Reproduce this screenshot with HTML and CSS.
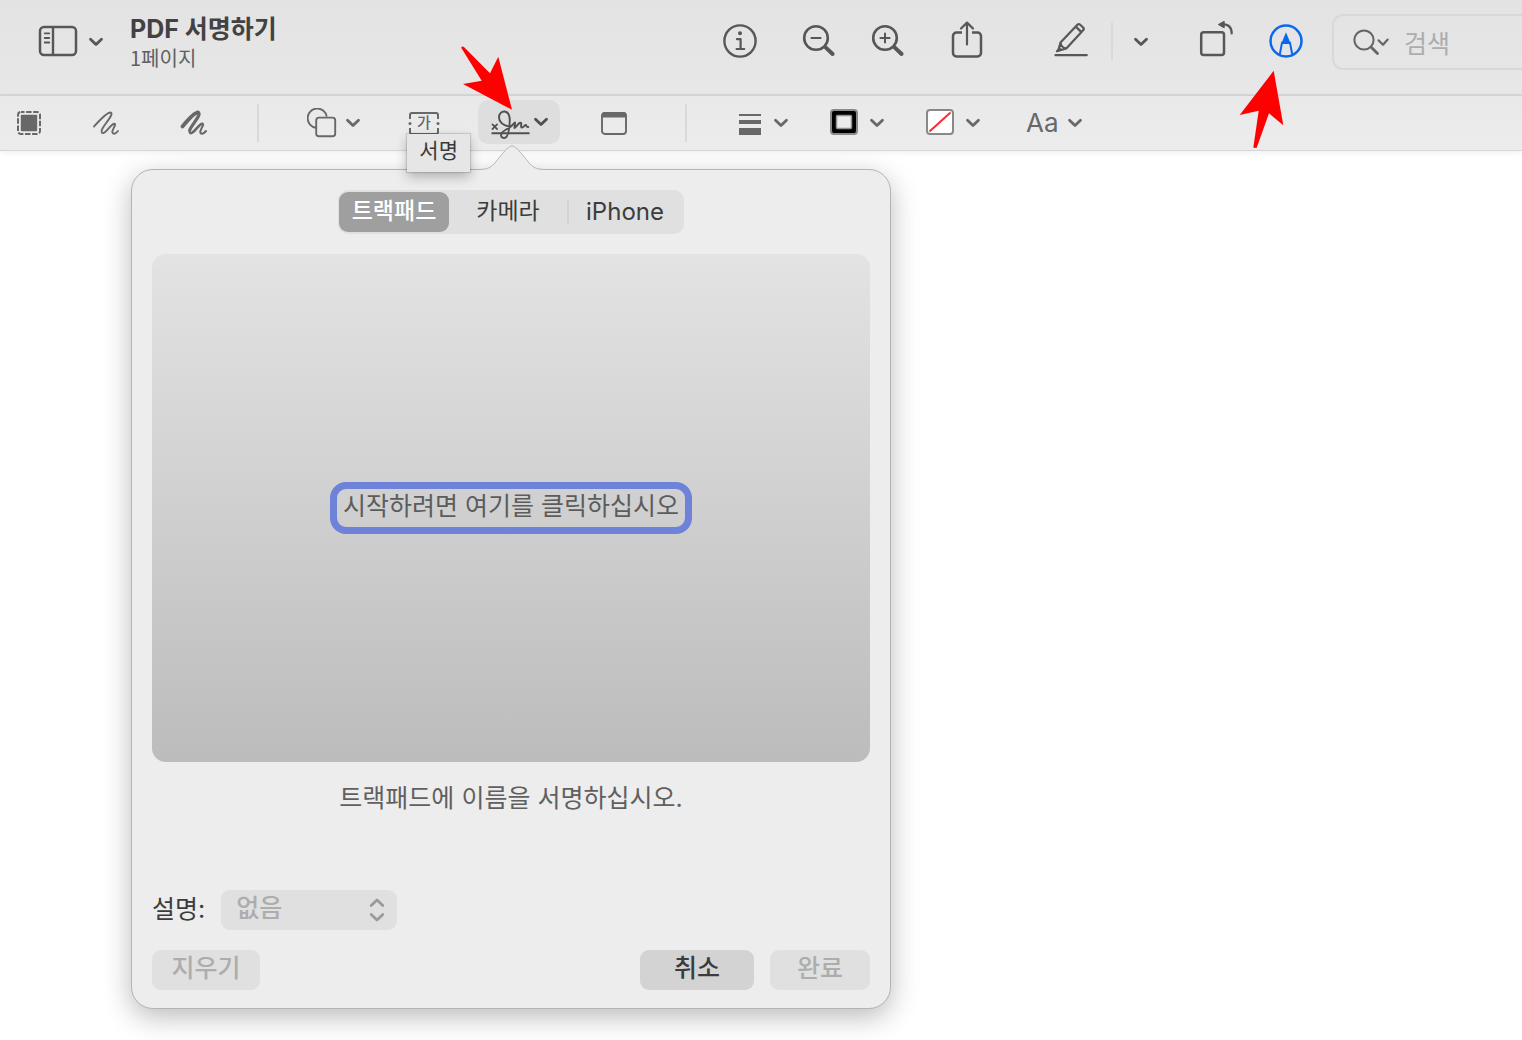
FILE: index.html
```html
<!DOCTYPE html>
<html lang="ko">
<head>
<meta charset="utf-8">
<title>PDF 서명하기</title>
<link rel="stylesheet" href="styles.css">
</head>
<body>
<svg class="defs" aria-hidden="true">
  <symbol id="chevron" viewBox="0 0 16 12"><path d="M2.5 3.2 8 8.6 13.5 3.2" fill="none" stroke="currentColor" stroke-width="2.8" stroke-linecap="round" stroke-linejoin="round"/></symbol>
</svg>

<header class="titlebar">
  <button class="btn sidebar-btn" aria-label="사이드바">
    <svg width="40" height="32" viewBox="0 0 40 32" fill="none" stroke="currentColor">
      <rect x="2" y="2" width="36" height="28" rx="4" stroke-width="2.5"/>
      <path d="M15 2v28" stroke-width="2.4"/>
      <path d="M6.7 8.3h4.6M6.7 13h4.6M6.7 17.5h4.6" stroke-width="1.8" stroke-linecap="round"/>
    </svg>
    <svg width="16" height="14" viewBox="0 -2 16 14"><use href="#chevron" width="16" height="12"/></svg>
  </button>
  <div class="titles">
    <h1 class="title">PDF 서명하기</h1>
    <p class="subtitle">1페이지</p>
  </div>
  <div class="actions">
    <button class="btn action" aria-label="정보">
      <svg width="36" height="36" viewBox="0 0 36 36" fill="none" stroke="currentColor">
        <circle cx="18" cy="18" r="15.6" stroke-width="2.4"/>
        <circle cx="18" cy="10.3" r="2" fill="currentColor" stroke="none"/>
        <path d="M15 16.2h3.6v9.6M14.6 26h7.6" stroke-width="2.2" stroke-linecap="round" stroke-linejoin="round"/>
      </svg>
    </button>
    <div class="zoom-group">
      <button class="btn action" aria-label="축소">
        <svg width="36" height="36" viewBox="0 0 36 36" fill="none" stroke="currentColor" stroke-linecap="round">
          <circle cx="15" cy="15" r="11.8" stroke-width="2.6"/>
          <path d="M10.4 15h9.2" stroke-width="2"/>
          <path d="m24.6 24.4 7 6.6" stroke-width="4"/>
        </svg>
      </button>
      <button class="btn action" aria-label="확대">
        <svg width="36" height="36" viewBox="0 0 36 36" fill="none" stroke="currentColor" stroke-linecap="round">
          <circle cx="15" cy="15" r="11.8" stroke-width="2.6"/>
          <path d="M10.4 15h9.2M15 10.4v9.2" stroke-width="2"/>
          <path d="m24.6 24.4 7 6.6" stroke-width="4"/>
        </svg>
      </button>
    </div>
    <button class="btn action" aria-label="공유">
      <svg width="36" height="40" viewBox="0 3 36 40" fill="none" stroke="currentColor" stroke-linecap="round" stroke-linejoin="round">
        <path d="M13 14.600H7.400a3.400 3.400 0 0 0-3.400 3.400v17a3.400 3.400 0 0 0 3.400 3.400h21.200A3.400 3.400 0 0 0 32 35V18a3.400 3.400 0 0 0-3.400-3.400H23" stroke-width="2.500" stroke-linecap="butt"/>
        <path d="M18 26.500V4.800M12 10.500 18 4.600l6 5.900" stroke-width="2.200"/>
      </svg>
    </button>
    <div class="pen-group">
      <button class="btn action" aria-label="하이라이트">
        <svg width="36" height="40" viewBox="0 0 36 40" fill="none" stroke="currentColor" stroke-linecap="round" stroke-linejoin="round">
          <path d="M7.500 21.500 24.400 3.800a2 2 0 0 1 2.800 0l2.900 2.700a2 2 0 0 1 0 2.800L13.300 27.400l-9.400 2.900 1.700-1.500zM22.800 5.600l5.600 5.500M7.500 21.500c.4 3.600 2 5.500 5.800 5.900" stroke-width="2.200"/>
          <path d="m3.400 30.600 6-1.800-3.600-3.200z" fill="currentColor" stroke="none"/>
          <path d="M2.500 34.200h31.200" stroke-width="2.200"/>
        </svg>
      </button>
      <span class="divider"></span>
      <button class="btn" aria-label="하이라이트 색상"><svg width="16" height="14" viewBox="0 -2 16 14"><use href="#chevron" width="16" height="12"/></svg></button>
    </div>
    <div class="tool-group">
      <button class="btn action" aria-label="회전">
        <svg width="38" height="40" viewBox="0 2 38 40" fill="none" stroke="currentColor">
          <rect x="4.200" y="13.200" width="22.800" height="22.800" rx="2.500" stroke-width="2.500"/>
          <path d="M25 5.200c6.500 0 9.700 3.300 9.700 9.300" stroke-width="2.200" stroke-linecap="round"/>
          <path d="M27.200 2.300v6.600L21.300 5.500z" fill="currentColor" stroke="currentColor" stroke-linejoin="round"/>
        </svg>
      </button>
      <button class="btn action markup" aria-label="마크업" aria-pressed="true">
        <svg width="36" height="36" viewBox="0 0 36 36" fill="none" stroke="currentColor">
          <circle cx="18" cy="18" r="15.500" stroke-width="2.500"/>
          <path d="m11.800 31.200 2.200-11.400h8l2.200 11.400" stroke-width="2"/>
          <path d="M18 9.200 22.800 21h-9.600z" fill="currentColor" stroke="none"/>
        </svg>
        <svg class="pointer pointer-up" width="46" height="80" viewBox="0 0 46 80" aria-hidden="true"><path d="M35.700 1.700 45.300 56.300 31 44.300 18.700 78.700h-3.400l5.400-37L1.700 46z" fill="#f00"/></svg>
      </button>
    </div>
    <label class="search">
      <svg width="38" height="28" viewBox="0 0 38 28" fill="none" stroke="currentColor" stroke-linecap="round" stroke-linejoin="round">
        <circle cx="12" cy="12" r="9.600" stroke-width="2"/>
        <path d="m19 19 6.500 6.500" stroke-width="2.800"/>
        <path d="m26.500 12.300 4.500 4.500 4.700-5.200" stroke-width="2.200"/>
      </svg>
      <input type="search" placeholder="검색" aria-label="검색">
    </label>
  </div>
</header>

<nav class="toolbar" aria-label="마크업 도구">
  <div class="tools sketch-tools">
    <button class="btn" aria-label="선택">
      <svg width="26" height="26" viewBox="0 0 26 26">
        <rect x="2" y="2" width="22" height="22" rx="3" fill="none" stroke="currentColor" stroke-width="2" stroke-dasharray="5.500 1.600" stroke-dashoffset="2"/>
        <rect x="4.800" y="4.800" width="16.400" height="16.400" rx="1" fill="currentColor"/>
      </svg>
    </button>
    <button class="btn draw" aria-label="스케치">
      <svg width="28" height="28" viewBox="0 0 28 28" fill="none" stroke="currentColor" stroke-width="1.900" stroke-linecap="round" stroke-linejoin="round">
        <path d="M2 17.500C7 12 14.500 3.500 18.500 3.500c4.500 1-7 12.500-8.700 17.500-.8 3 .8 4 3 2.300 3.500-3 6.500-8 9.200-8.600 3.200-.2-1.500 5.500-1.700 7.800 0 3.200 3 2.800 5.700-.5"/>
      </svg>
    </button>
    <button class="btn draw" aria-label="그리기">
      <svg width="28" height="28" viewBox="0 0 28 28" fill="none" stroke="currentColor" stroke-linecap="round" stroke-linejoin="round">
        <path d="M2.500 17.500C7 12 14.500 3.500 18 3.500" stroke-width="3.800"/>
        <path d="M18 3.500c4.500 1-6 12-8.200 17.500" stroke-width="3.200"/>
        <path d="M9.800 21c-.8 3 .8 4 3 2.300 3.500-3 6.500-8 9.200-8.600" stroke-width="2.600"/>
        <path d="M22 14.700c3.200-.2-1.500 5.500-1.700 7.800 0 3.200 3 2.800 5.700-.5" stroke-width="2.100"/>
      </svg>
    </button>
  </div>
  <span class="divider"></span>
  <div class="tools insert-tools">
    <button class="btn" aria-label="도형">
      <svg width="30" height="30" viewBox="0 0 30 30" fill="none" stroke="currentColor" stroke-width="1.900">
        <path d="M9.200 19.700A9.600 9.600 0 1 1 19.700 8.600"/>
        <rect x="9.200" y="9.600" width="19" height="18.600" rx="2.800"/>
      </svg>
      <svg width="16" height="12"><use href="#chevron"/></svg>
    </button>
    <button class="btn text-tool" aria-label="텍스트">
      <span class="text-glyph">가</span>
      <svg width="32" height="26" viewBox="0 0 32 26" fill="none" stroke="currentColor" stroke-width="2">
        <path d="M2 9V5a2 2 0 0 1 2-2h24a2 2 0 0 1 2 2v4M2 18v4a2 2 0 0 0 2 2h24a2 2 0 0 0 2-2v-4"/>
        <circle cx="2" cy="13.500" r="1.500" fill="currentColor" stroke="none"/><circle cx="30" cy="13.500" r="1.500" fill="currentColor" stroke="none"/>
      </svg>
    </button>
    <button class="btn sign-tool" aria-label="서명" aria-expanded="true" aria-describedby="sign-tip">
      <svg width="40" height="36" viewBox="0 -6 40 36" fill="none" stroke="currentColor" stroke-linecap="round" stroke-linejoin="round">
        <path d="M1.500 23.300h38" stroke-width="1.900" stroke-linecap="butt"/>
        <path d="m2.400 14.300 4.700 4.800M7.100 14.300l-4.700 4.800" stroke-width="1.700"/>
        <path d="M20.300 17C14 15.500 9 12 9 7.500 9 3.500 11.800 1.300 14.500 1.500 19 2 20 7 19.700 12 19.300 20 18 28 14 28 11.500 28 10.500 26 11.500 23.500 13 20.500 19 18.500 22.500 15 24 13.500 24.800 12.500 25 12.500 25.500 14 24 17.500 24.500 18 26 18 28 12.800 30.500 12.800 32.500 13 30 17 31.500 17.500 33.500 18 34.500 15 35.800 15 37 15.200 36 17.500 38.300 17" stroke-width="1.900"/>
      </svg>
      <svg width="16" height="12"><use href="#chevron"/></svg>
      <span class="tooltip" id="sign-tip" role="tooltip">서명</span>
      <svg class="pointer pointer-down" width="54" height="66" viewBox="0 0 54 66" aria-hidden="true"><path d="M1.200 2.700q1-2 3-.5L30 28.300 38.300 11.700 52 64.700 3 39l18.700-3.300z" fill="#f00"/></svg>
    </button>
    <button class="btn" aria-label="메모">
      <svg width="28" height="26" viewBox="0 0 28 26">
        <rect x="2" y="3" width="24" height="21" rx="3" fill="none" stroke="currentColor" stroke-width="1.900"/>
        <path d="M1.500 7.500V5a3 3 0 0 1 3-3h19a3 3 0 0 1 3 3v2.500z" fill="currentColor"/>
      </svg>
    </button>
  </div>
  <span class="divider"></span>
  <div class="tools style-tools">
    <button class="btn line-tool" aria-label="선 두께">
      <svg width="24" height="24" viewBox="0 0 24 24" fill="currentColor"><path d="M1 3h22v2H1zM1 9h22v4H1zM1 17h22v7H1z"/></svg>
      <svg width="16" height="12"><use href="#chevron"/></svg>
    </button>
    <button class="btn color-tool" aria-label="테두리 색상">
      <svg width="28" height="28" viewBox="0 0 28 28">
        <rect x="1" y="1" width="26" height="24" rx="3" fill="#000" stroke="#8a8a8a" stroke-width="2"/>
        <rect x="6.500" y="6.500" width="15" height="13" rx="1" fill="#ebebeb" stroke="#909090" stroke-width="1.500"/>
      </svg>
      <svg width="16" height="12"><use href="#chevron"/></svg>
    </button>
    <button class="btn color-tool" aria-label="채우기 색상">
      <svg width="28" height="28" viewBox="0 0 28 28">
        <rect x="1" y="1" width="26" height="24" rx="3" fill="#fff" stroke="#888" stroke-width="2"/>
        <path d="M3.500 22.500 24.500 3.500" stroke="#fb2b31" stroke-width="2"/>
      </svg>
      <svg width="16" height="12"><use href="#chevron"/></svg>
    </button>
    <button class="btn font-tool" aria-label="텍스트 스타일">
      <span>Aa</span>
      <svg width="16" height="12"><use href="#chevron"/></svg>
    </button>
  </div>
</nav>

<main class="document">
  <section class="popover" aria-label="서명 생성">
    <svg class="popover-tip" width="68" height="26" viewBox="0 0 68 26" aria-hidden="true"><path d="M0 24.500C14 24.500 15 20 22 11.500 27 5.500 31 1 34 1s7 4.500 12 10.500C53 20 54 24.500 68 24.500V26H0z" fill="#ededed"/><path d="M0 24.500C14 24.500 15 20 22 11.500 27 5.500 31 1 34 1s7 4.500 12 10.500C53 20 54 24.500 68 24.500" fill="none" stroke="#b4b4b4"/></svg>
    <div class="segments" role="tablist">
      <button class="segment selected" role="tab" aria-selected="true">트랙패드</button>
      <button class="segment" role="tab" aria-selected="false">카메라</button>
      <button class="segment last" role="tab" aria-selected="false">iPhone</button>
    </div>
    <div class="canvas">
      <button class="start">시작하려면 여기를 클릭하십시오</button>
    </div>
    <p class="hint">트랙패드에 이름을 서명하십시오.</p>
    <div class="field">
      <label for="description">설명:</label>
      <span class="select-wrap">
        <select id="description" disabled><option>없음</option></select>
        <svg width="16" height="24" viewBox="0 0 16 24" fill="none" stroke="#9a9a9a" stroke-width="2.800" stroke-linecap="round" stroke-linejoin="round" aria-hidden="true"><path d="M2.200 7.500 8 2l5.800 5.500M2.200 16.500 8 22l5.800-5.500"/></svg>
      </span>
    </div>
    <div class="buttons">
      <button class="push clear" disabled>지우기</button>
      <button class="push cancel">취소</button>
      <button class="push done" disabled>완료</button>
    </div>
  </section>
</main>
</body>
</html>
```

FILE: styles.css
```css
* { box-sizing: border-box; }

body {
  margin: 0;
  min-height: 100vh;
  display: flex;
  flex-direction: column;
  background: #fff;
  color: #3c3c3c;
  font-family: "Inter", "Noto Sans CJK KR", sans-serif;
  font-size: 25px;
  overflow-x: hidden;
}

h1, p { margin: 0; }
svg { display: block; flex: none; }
.defs { position: absolute; width: 0; height: 0; }

button, input, select {
  font: inherit;
  color: inherit;
  margin: 0;
  padding: 0;
  border: 0;
  background: none;
}

.btn {
  display: flex;
  align-items: center;
  justify-content: center;
  gap: 8px;
  flex: none;
}

.divider {
  width: 2px;
  height: 38px;
  background: #d9d9d9;
  flex: none;
}

/* Title bar */
.titlebar {
  display: flex;
  align-items: flex-start;
  height: 96px;
  padding-left: 38px;
  border-bottom: 2px solid #d8d8d8;
  background: linear-gradient(#e3e3e3, #e7e7e7);
  color: #575757;
}

.sidebar-btn { height: 82px; gap: 10px; }

.titles {
  margin-left: 26px;
  padding-top: 13px;
  white-space: nowrap;
}

.title {
  font-size: 25px;
  line-height: 32px;
  font-weight: 700;
  color: #424242;
}

.subtitle {
  font-family: "Noto Sans CJK KR", sans-serif;
  font-size: 20px;
  line-height: 26px;
  color: #606060;
}

.actions {
  display: flex;
  align-items: center;
  height: 82px;
  margin-left: auto;
  gap: 39px;
}

.action { width: 40px; height: 40px; }
.zoom-group { display: flex; gap: 29px; }
.pen-group { display: flex; align-items: center; gap: 20px; margin-left: 25px; }
.tool-group { display: flex; gap: 30px; margin-left: 8px; margin-right: -13px; }
.markup { position: relative; color: #0a68f0; }

.search {
  display: flex;
  align-items: center;
  gap: 14px;
  width: 190px;
  height: 56px;
  margin-top: 2px;
  padding-left: 18px;
  border: 2px solid #d8d8d8;
  border-right: 0;
  border-radius: 11px 0 0 11px;
  color: #666;
}

.search input { width: 100%; min-width: 0; padding-top: 4px; outline: 0; }
.search input::placeholder { color: #adadad; opacity: 1; }

/* Markup toolbar */
.toolbar {
  display: flex;
  align-items: center;
  height: 55px;
  padding-left: 16px;
  border-bottom: 1px solid #d6d6d6;
  background: linear-gradient(#e9e9e9, #ececec);
  box-shadow: 0 1px 6px rgba(0, 0, 0, .08);
  color: #686868;
}

.tools { display: flex; align-items: center; }
.sketch-tools { gap: 60px; margin-right: 49px; }
.sketch-tools .draw:nth-child(2) { margin-left: -10px; }
.insert-tools { gap: 39px; margin: 0 57px 0 48px; }
.style-tools { gap: 41px; margin-left: 51px; }
.line-tool, .color-tool { gap: 11px; }
.font-tool {
  margin-left: 4px;
  font-size: 26px;
  line-height: 32px;
}

.text-tool { display: grid; place-items: center; margin-left: 8px; }
.text-tool > * { grid-area: 1 / 1; }
.text-glyph { font-size: 15px; line-height: 20px; font-weight: 500; }

.sign-tool {
  position: relative;
  gap: 3px;
  width: 82px;
  height: 44px;
  margin: 0 1px 2px -1px;
  border-radius: 10px;
  background: #dedede;
  color: #505050;
}

.tooltip {
  position: absolute;
  top: 34px;
  right: 90px;
  z-index: 3;
  padding: 3px 12px 7px;
  font-size: 21px;
  line-height: 28px;
  white-space: nowrap;
  color: #3a3a3a;
  background: #e6e6e6;
  box-shadow: 0 0 1px 1px rgba(0, 0, 0, .12), 0 5px 12px rgba(0, 0, 0, .25);
}

.pointer { position: absolute; z-index: 4; pointer-events: none; }
.pointer-down { left: -18px; top: -55px; }
.pointer-up { left: -28px; top: 48px; }

/* Signature popover */
.document { flex: 1; padding: 18px 0 31px 131px; }

.popover {
  position: relative;
  z-index: 1;
  width: 760px;
  max-width: calc(100% - 20px);
  padding: 20px 20px 18px;
  border: 1px solid #b4b4b4;
  border-radius: 22px;
  background: #ededed;
  box-shadow: 0 8px 28px rgba(0, 0, 0, .27);
}

.popover-tip { position: absolute; left: 346px; top: -25px; }

.segments {
  display: flex;
  width: 346px;
  margin: 0 auto;
  padding: 2px 1px;
  border-radius: 10px;
  background: #e0e0e0;
}

.segment {
  flex: 1 1 118px;
  height: 40px;
  padding-bottom: 2px;
  border-radius: 9px;
  font-size: 23px;
  line-height: 38px;
  white-space: nowrap;
}

.segment.selected {
  flex-basis: 110px;
  background: #9f9f9f;
  color: #fff;
  font-weight: 500;
}

.segment.last {
  flex-basis: 116px;
  padding-bottom: 0;
  border-radius: 0;
  font-size: 24px;
  background: linear-gradient(#d3d3d3, #d3d3d3) left center / 2px 24px no-repeat;
}

.canvas {
  display: flex;
  align-items: center;
  justify-content: center;
  height: 508px;
  margin-top: 20px;
  border-radius: 14px;
  background: linear-gradient(#e3e3e3, #bcbcbc);
}

.start {
  height: 52px;
  padding: 0 6px 4px;
  border: 7px solid #6d82d8;
  border-radius: 16px;
  line-height: 34px;
  color: #5c5c5c;
}

.hint {
  margin-top: 18px;
  line-height: 36px;
  text-align: center;
  color: #606060;
}

.field {
  display: flex;
  align-items: center;
  gap: 16px;
  margin-top: 74px;
}

.field label { line-height: 36px; padding-bottom: 2px; }

.select-wrap { display: grid; align-items: center; width: 176px; }
.select-wrap > * { grid-area: 1 / 1; }
.select-wrap svg { justify-self: end; margin-right: 12px; pointer-events: none; }

.field select {
  appearance: none;
  width: 100%;
  height: 40px;
  padding: 0 40px 4px 15px;
  border-radius: 9px;
  background: #e0e0e0;
  color: #adadad;
  font-weight: 500;
  opacity: 1;
}

.buttons { display: flex; gap: 16px; margin-top: 20px; }

.push {
  height: 40px;
  padding-bottom: 4px;
  border-radius: 9px;
  line-height: 36px;
  font-weight: 500;
  background: #d3d3d3;
}

.push:disabled { background: #e0e0e0; color: #adadad; }
.clear { width: 108px; margin-right: auto; }
.cancel { width: 114px; }
.done { width: 100px; }
```
